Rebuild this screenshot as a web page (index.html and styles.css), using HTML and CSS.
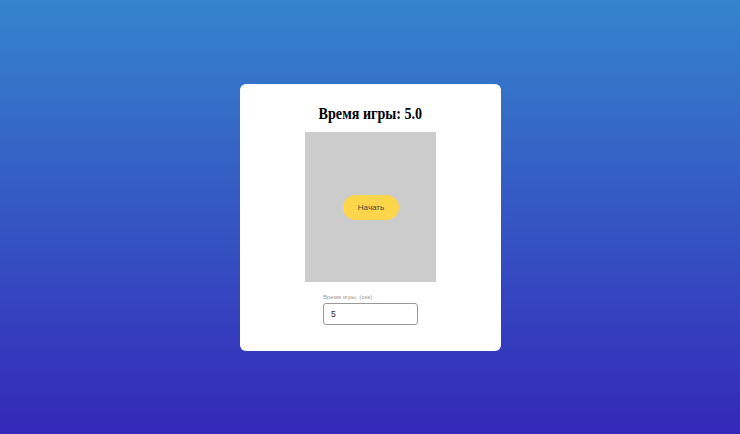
FILE: index.html
```html
<!DOCTYPE html>
<html lang="ru">
<head>
<meta charset="utf-8">
<link rel="stylesheet" href="styles.css">
</head>
<body>
<div class="card">
  <h2 class="title">Время игры: 5.0</h2>
  <div class="field">
    <button class="start">Начать</button>
  </div>
  <div class="settings">
    <label class="label">Время игры, (сек)</label>
    <input class="input" type="text" value="5">
  </div>
</div>
</body>
</html>
```
FILE: styles.css
```css
html, body {
  margin: 0;
  height: 100%;
}
body {
  background: linear-gradient(to bottom, #3584cd, #3428b8);
  display: flex;
  align-items: center;
  justify-content: center;
  font-family: "Liberation Sans", Arial, sans-serif;
}
.card {
  width: 261px;
  height: 267px;
  box-sizing: border-box;
  background: #fff;
  border-radius: 6px;
  display: flex;
  flex-direction: column;
  align-items: center;
  padding-top: 18px;
  margin-left: 1px;
}
.title {
  margin: 0;
  font-family: "Liberation Serif", "Times New Roman", serif;
  font-weight: bold;
  font-size: 17px;
  line-height: 24px;
  color: #000;
  transform: scaleX(0.83);
  white-space: nowrap;
}
.field {
  margin-top: 6px;
  width: 131px;
  height: 150px;
  background: #cccccc;
  display: flex;
  align-items: center;
  justify-content: center;
}
.start {
  width: 56px;
  height: 25px;
  border: none;
  border-radius: 13px;
  background: #fdd54b;
  color: #4a4a3a;
  font-family: "Liberation Sans", Arial, sans-serif;
  font-size: 8px;
  padding: 0;
  margin-top: 2px;
  margin-left: 1px;
}
.settings {
  margin-top: 11px;
  width: 95px;
  display: flex;
  flex-direction: column;
}
.label {
  font-size: 6px;
  color: #999;
  line-height: 8px;
  margin-bottom: 2px;
}
.input {
  width: 95px;
  height: 22px;
  box-sizing: border-box;
  border: 1px solid #999;
  border-radius: 3px;
  padding: 0 7px;
  font-family: "Liberation Sans", Arial, sans-serif;
  font-size: 8.5px;
  color: #222;
}
```
